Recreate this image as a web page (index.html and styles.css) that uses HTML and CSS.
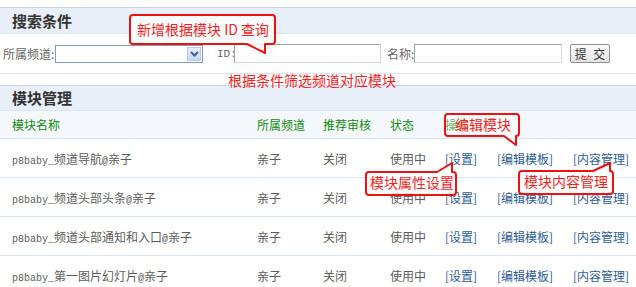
FILE: index.html
```html
<!DOCTYPE html>
<html lang="zh-CN">

<head>
    <meta charset="UTF-8">
    <title>模块管理</title>
    <link rel="stylesheet" href="styles.css">
</head>

<body>

    <div class="page">
        <div class="box-title">搜索条件</div>

        <div class="search-row">
            <label class="lbl lbl-channel">所属频道:</label>
            <div class="select">
                <span class="select-btn">
                    <svg width="9" height="6" viewBox="0 0 9 6"><path d="M1 1 L4.5 4.5 L8 1" fill="none" stroke="#3d5f96" stroke-width="2"/></svg>
                </span>
            </div>
            <label class="lbl lbl-id">ID:</label>
            <input type="text" class="txt">
            <label class="lbl lbl-name">名称:</label>
            <input type="text" class="txt txt-name">
            <button class="btn">提&nbsp;交</button>
        </div>

        <div class="note-row">根据条件筛选频道对应模块</div>

        <div class="box-title box-title-list">模块管理</div>

        <div class="grid head">
            <span>模块名称</span>
            <span>所属频道</span>
            <span>推荐审核</span>
            <span>状态</span>
            <span>操作</span>
        </div>

        <div class="grid row">
            <span class="mod-name"><span class="asc">p8baby_</span>频道导航<span class="asc">@</span>亲子</span>
            <span>亲子</span>
            <span>关闭</span>
            <span>使用中</span>
            <span class="ops"><a class="op-set">[设置]</a><a class="op-tpl">[编辑模板]</a><a>[内容管理]</a></span>
        </div>
        <div class="grid row">
            <span class="mod-name"><span class="asc">p8baby_</span>频道头部头条<span class="asc">@</span>亲子</span>
            <span>亲子</span>
            <span>关闭</span>
            <span>使用中</span>
            <span class="ops"><a class="op-set">[设置]</a><a class="op-tpl">[编辑模板]</a><a>[内容管理]</a></span>
        </div>
        <div class="grid row">
            <span class="mod-name"><span class="asc">p8baby_</span>频道头部通知和入口<span class="asc">@</span>亲子</span>
            <span>亲子</span>
            <span>关闭</span>
            <span>使用中</span>
            <span class="ops"><a class="op-set">[设置]</a><a class="op-tpl">[编辑模板]</a><a>[内容管理]</a></span>
        </div>
        <div class="grid row">
            <span class="mod-name"><span class="asc">p8baby_</span>第一图片幻灯片<span class="asc">@</span>亲子</span>
            <span>亲子</span>
            <span>关闭</span>
            <span>使用中</span>
            <span class="ops"><a class="op-set">[设置]</a><a class="op-tpl">[编辑模板]</a><a>[内容管理]</a></span>
        </div>

        <!-- annotation callouts -->
        <div class="callout callout-id">
            <svg class="callout-shape" width="147" height="40"><path d="M4 1 H143 Q146 1 146 4 V27 Q146 30 143 30 H136 V39 L118 30 H4 Q1 30 1 27 V4 Q1 1 4 1 Z"/></svg>
            <span class="callout-text">新增根据模块 ID 查询</span>
        </div>
        <div class="callout callout-edit">
            <svg class="callout-shape" width="77" height="33"><path d="M4 1 H72 Q75 1 75 4 V20 Q75 23 72 23 H72 V32 L60 23 H4 Q1 23 1 20 V4 Q1 1 4 1 Z"/></svg>
            <span class="callout-text">编辑模块</span>
        </div>
        <div class="callout callout-attr">
            <svg class="callout-shape" width="93" height="35" viewBox="0 -9 93 35"><path d="M4 1 H72 L87 -8 V1 H88 Q91 1 91 4 V21 Q91 24 88 24 H4 Q1 24 1 21 V4 Q1 1 4 1 Z"/></svg>
            <span class="callout-text">模块属性设置</span>
        </div>
        <div class="callout callout-content">
            <svg class="callout-shape" width="97" height="35" viewBox="0 -9 97 35"><path d="M4 1 H75 L92 -7 V1 Q95 1 95 4 V21 Q95 24 92 24 H4 Q1 24 1 21 V4 Q1 1 4 1 Z"/></svg>
            <span class="callout-text">模块内容管理</span>
        </div>
    </div>

</body>

</html>
```

FILE: styles.css
```css
body {
    margin: 0;
    padding: 0;
    font-family: "Noto Sans CJK SC", "Liberation Sans", sans-serif;
    font-size: 12px;
    color: #555;
    background: #fff;
}

.page {
    position: relative;
    padding-top: 7px;
}

.box-title {
    height: 25px;
    line-height: 25px;
    padding-left: 12px;
    background: #e9eff8;
    border-top: 1px solid #c9d8e9;
    border-bottom: 1px solid #dce6f1;
    font-size: 15px;
    font-weight: bold;
    color: #333;
}

.box-title-list {
    height: 24px;
    line-height: 24px;
}

/* search form */
.search-row {
    height: 39px;
    display: flex;
    align-items: center;
    padding-left: 3px;
    border-bottom: 1px solid #d9e4ef;
}

.search-row > * {
    flex-shrink: 0;
}

.lbl {
    color: #666;
    font-size: 12px;
    white-space: nowrap;
}

.lbl-channel {
    width: 52px;
}

.lbl-id {
    width: 17px;
    margin-left: 14px;
    font-family: "Liberation Mono", monospace;
    font-size: 11px;
}

.lbl-name {
    width: 27px;
    margin-left: 6px;
}

.select {
    width: 145px;
    height: 16px;
    border: 1px solid #7f9db9;
    display: flex;
    justify-content: flex-end;
    align-items: center;
    padding-right: 1px;
}

.select-btn {
    width: 14px;
    height: 14px;
    display: flex;
    align-items: center;
    justify-content: center;
    background: linear-gradient(#e6eefc, #c6d7f4);
    border: 1px solid #b8cbec;
    box-sizing: border-box;
}

.txt {
    width: 143px;
    height: 15px;
    margin: 0;
    padding: 1px;
    border: 1px solid #a7a7a7;
    border-right-color: #d6d6d6;
    border-bottom-color: #d6d6d6;
}

.txt-name {
    width: 144px;
}

.btn {
    width: 40px;
    height: 19px;
    margin-left: 8px;
    padding: 0;
    font-family: "Noto Sans CJK SC", sans-serif;
    font-size: 12px;
    letter-spacing: 2px;
    text-indent: 2px;
    color: #333;
    background: linear-gradient(#fdfdfd, #e2e2e2);
    border: 1px solid #8f8f8f;
    border-radius: 2px;
}

.note-row {
    height: 11px;
    line-height: 12px;
    padding-left: 228px;
    font-size: 14px;
    color: #f52222;
    position: relative;
    z-index: 2;
}

/* module list */
.grid {
    display: grid;
    grid-template-columns: 245px 66px 67px 55px 1fr;
    align-items: center;
    padding-left: 12px;
    border-bottom: 1px solid #d7e5f2;
}

.head {
    height: 27px;
    background: #f4f8fc;
    color: #108a10;
    font-size: 12px;
}

.row {
    height: 38px;
    color: #5c5c5c;
}

.mod-name {
    white-space: nowrap;
}

.asc {
    font-family: "Liberation Mono", monospace;
    font-size: 10px;
}

.ops {
    white-space: nowrap;
}

.ops a {
    display: inline-block;
    color: #2e5d97;
    text-decoration: none;
}

.op-set {
    width: 52px;
}

.op-tpl {
    width: 76px;
}

/* annotation callouts */
.callout {
    position: absolute;
    z-index: 3;
}

.callout-shape {
    position: absolute;
    left: 0;
    top: 0;
    overflow: visible;
}

.callout-shape path {
    fill: rgba(255, 255, 255, 0.75);
    stroke: #ee1111;
    stroke-width: 2;
    stroke-linejoin: round;
}

.callout-text {
    position: relative;
    font-size: 14px;
    color: #f52222;
    white-space: nowrap;
}

.callout-id {
    left: 129px;
    top: 14px;
    width: 147px;
    height: 31px;
}

.callout-id .callout-text {
    left: 8px;
    top: 5px;
}

.callout-edit {
    left: 444px;
    top: 113px;
}

.callout-edit .callout-shape path {
    fill: rgba(255, 255, 255, 0.35);
}

.callout-edit .callout-text {
    left: 11px;
    top: 1px;
}

.callout-attr {
    left: 365px;
    top: 171px;
}

.callout-attr .callout-shape {
    top: -9px;
}

.callout-attr .callout-text {
    left: 5px;
    top: 1px;
}

.callout-content {
    left: 518px;
    top: 170px;
}

.callout-content .callout-shape {
    top: -9px;
}

.callout-content .callout-text {
    left: 6px;
    top: 1px;
}
```
